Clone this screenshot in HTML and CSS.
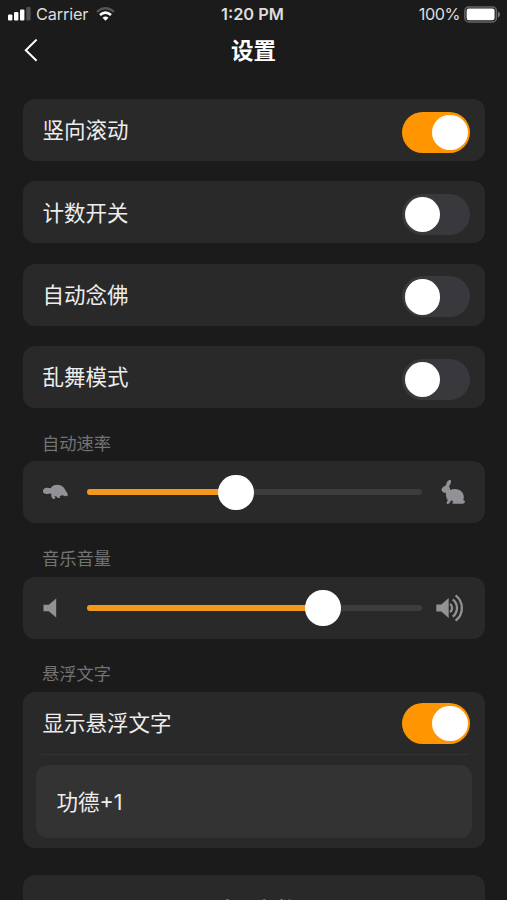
FILE: index.html
```html
<!DOCTYPE html>
<html lang="zh-CN">
<head>
<meta charset="utf-8">
<meta name="viewport" content="width=device-width">
<title>设置</title>
<link rel="stylesheet" href="styles.css">
</head>
<body>
<div class="status">
  <div class="status-left">
    <svg class="signal" width="23" height="14" viewBox="0 0 23 14"><g fill="#fff"><rect x="0" y="7.5" width="4.4" height="6" rx="1"/><rect x="6" y="5" width="4.4" height="8.5" rx="1"/><rect x="12" y="2.5" width="4.4" height="11" rx="1"/></g><rect x="18.3" y="0" width="4.4" height="13.5" rx="1" fill="#505050"/></svg>
    <span>Carrier</span>
    <svg class="wifi" width="19" height="14" viewBox="0 0 19 14" fill="none"><path d="M1 4.9Q9.5-2.4 18 4.9" stroke="#555" stroke-width="2.2"/><path d="M4 8Q9.5 3.1 15 8" stroke="#fff" stroke-width="2.6"/><path d="M6.5 10.7Q9.5 8.2 12.5 10.7L9.5 13.8Z" fill="#fff"/></svg>
  </div>
  <div class="time">1:20 PM</div>
  <div class="status-right">
    <span>100%</span>
    <svg width="36" height="17" viewBox="0 0 36 17"><rect x=".9" y=".9" width="31.5" height="15" rx="4" fill="none" stroke="#666" stroke-width="1.5"/><rect x="2.6" y="2.6" width="28" height="11.6" rx="2.2" fill="#fff"/><path d="M34 5.5q2 1 2 3t-2 3z" fill="#777"/></svg>
  </div>
</div>
<header class="nav">
  <svg class="back" width="14" height="24" viewBox="0 0 14 24"><path d="M12.6 .6 1.8 11.2l10.8 10.6" fill="none" stroke="#fff" stroke-width="2"/></svg>
  <h1>设置</h1>
</header>
<main>
  <section class="card row"><span>竖向滚动</span><div class="switch on"><i></i></div></section>
  <section class="card row"><span>计数开关</span><div class="switch"><i></i></div></section>
  <section class="card row"><span>自动念佛</span><div class="switch"><i></i></div></section>
  <section class="card row"><span>乱舞模式</span><div class="switch"><i></i></div></section>

  <h2>自动速率</h2>
  <section class="card slider">
    <svg class="low" width="26" height="16" viewBox="0 0 26 16" fill="#929296"><path d="M0 7C0 5 1.8 3.6 4 3.8l3.6.4C9.2 1.8 11.6.7 14.4.8c4.4.2 7.4 3 8.6 6.8 1.3 1 2 2.6 1.7 4.2-1.6.7-3.4.3-4.9-.6l-1.5.2-1.6.9 .5 1.4-2.3.3-1.8-1.8-1.5.1.8 2.2-2.4.6c-1.4-1.3-2-3.4-1.7-5.3L6.2 9.4c-1.4.8-3.2.8-5 .2C.3 9 0 8 0 7Z"/></svg>
    <div class="track"><div class="fill" style="width:44.5%"><i></i></div></div>
    <svg class="high" width="26" height="26" viewBox="0 0 26 26" fill="#929296"><path d="M.4 10.5C1.2 8.4 3 7 5 6.2 5.2 3.8 6.4 1.6 9.2.8l.8 1C10.1 4.4 9.2 6 7.9 7.6c1 1 1.3 2.2 1.2 3.4 2.5-.9 5.7-1.3 8.5-.3 3.7 1.4 5.5 4.6 5.2 8.2l-.5 2.3c1.4.2 2 1.2 1.4 2.4-.5.9-1.2 1.1-2.4 1.1H11.6c-.3-1.2.2-2 .8-2.4L10 21.4l-1.7 3-2.2.5-.6-1.4 1.3-2.1C5.6 19.4 4.6 16.9 4.9 13.8 3 14.1.8 13 .4 10.5Z"/></svg>
  </section>

  <h2>音乐音量</h2>
  <section class="card slider">
    <svg class="low" width="26" height="20" viewBox="0 0 26 20" fill="#929296"><path d="M.5 6.8h5.3L13.2.4v19.2l-7.4-6.4H.5z"/></svg>
    <div class="track"><div class="fill" style="width:70.4%"><i></i></div></div>
    <svg class="speaker" width="30" height="28" viewBox="0 0 30 28"><path d="M.3 10.6h5L12.7 4v20l-7.4-6.6h-5z" fill="#929296"/><g fill="none" stroke="#929296" stroke-width="2.3"><path d="M14 9.9a5 5 0 0 1 0 8.2M16.7 5.3a11 11 0 0 1 0 17.4M19.6 1.3a16 16 0 0 1 0 25.4"/></g></svg>
  </section>

  <h2>悬浮文字</h2>
  <section class="card group">
    <div class="row"><span>显示悬浮文字</span><div class="switch on"><i></i></div></div>
    <div class="divider"></div>
    <div class="field">功德+1</div>
  </section>
  <section class="card reset">重置次数</section>
</main>
</body>
</html>
```
FILE: styles.css
```css
* { box-sizing: border-box; }
html, body { height: 100%; overflow: hidden; }
body {
  margin: 0;
  background: #1b1b1b;
  color: #ededed;
  font-family: Inter, "Noto Sans CJK SC", sans-serif;
}
svg { display: block; flex: none; }
.status {
  height: 28px;
  display: grid;
  grid-template-columns: 1fr auto 1fr;
  align-items: center;
  padding: 0 7px 0 8px;
  font-size: 16.3px;
  line-height: 28px;
  color: #ddd;
}
.status-left, .status-right { display: flex; align-items: center; }
.status-left { gap: 5px; letter-spacing: -.15px; }
.wifi { margin-left: 3px; }
.status-right { justify-content: flex-end; gap: 4px; letter-spacing: -.5px; }
.time { font-weight: 600; font-size: 16.4px; margin-right: 3px; }
.nav {
  height: 45px;
  display: grid;
  grid-template-columns: 1fr auto 1fr;
  align-items: center;
  padding: 0 24px;
}
.nav h1 { margin: 0; font-size: 22.5px; line-height: 45px; font-weight: 600; color: #fff; }
main { padding: 26px 22px 0 22.5px; }
.card { background: #292929; border-radius: 12px; }
.card.row { margin-bottom: 20.4px; }
.row {
  height: 62px;
  display: flex;
  align-items: center;
  justify-content: space-between;
  padding: 4px 15px 0 20px;
  font-size: 21.5px;
}
.row span { line-height: 62px; margin-top: -3.6px; }
.switch {
  width: 68px;
  height: 41px;
  padding: 3px 2.5px;
  border-radius: 21px;
  background: #39393d;
  display: flex;
}
.switch i, .fill i {
  display: block;
  flex: none;
  width: 35.5px;
  height: 35.5px;
  border-radius: 50%;
  background: #fff;
}
.switch.on { background: #ff9500; justify-content: flex-end; }
h2 {
  margin: 0;
  height: 53.3px;
  padding: 19.5px 0 0 19.5px;
  font-size: 17.3px;
  line-height: 32px;
  font-weight: 400;
  color: #737373;
}
.card.row + h2 { margin-top: -20.4px; }
.slider {
  height: 62px;
  display: flex;
  align-items: center;
  padding: 0 18px 0 20px;
}
.track {
  flex: none;
  width: 335px;
  height: 6px;
  border-radius: 3px;
  background: #3d3d3d;
  margin: 0 14px 0 18.5px;
}
.fill {
  height: 6px;
  border-radius: 3px;
  background: #f39a1c;
  display: flex;
  align-items: center;
  justify-content: flex-end;
}
.fill i { margin-right: -17.8px; }
.high { margin-left: 5px; }
.group { height: 156px; }
.group .row { padding-top: 0; }
.group .row span { margin-top: 0; }
.divider { height: 1px; margin: 0 16px 10px 19px; background: #333; }
.field {
  height: 73px;
  margin: 0 13px;
  padding-left: 21px;
  border-radius: 12px;
  background: #333;
  font-size: 21.5px;
  line-height: 74px;
}
.reset {
  height: 62px;
  margin-top: 27px;
  text-align: center;
  font-size: 21.5px;
  line-height: 70px;
}
```
